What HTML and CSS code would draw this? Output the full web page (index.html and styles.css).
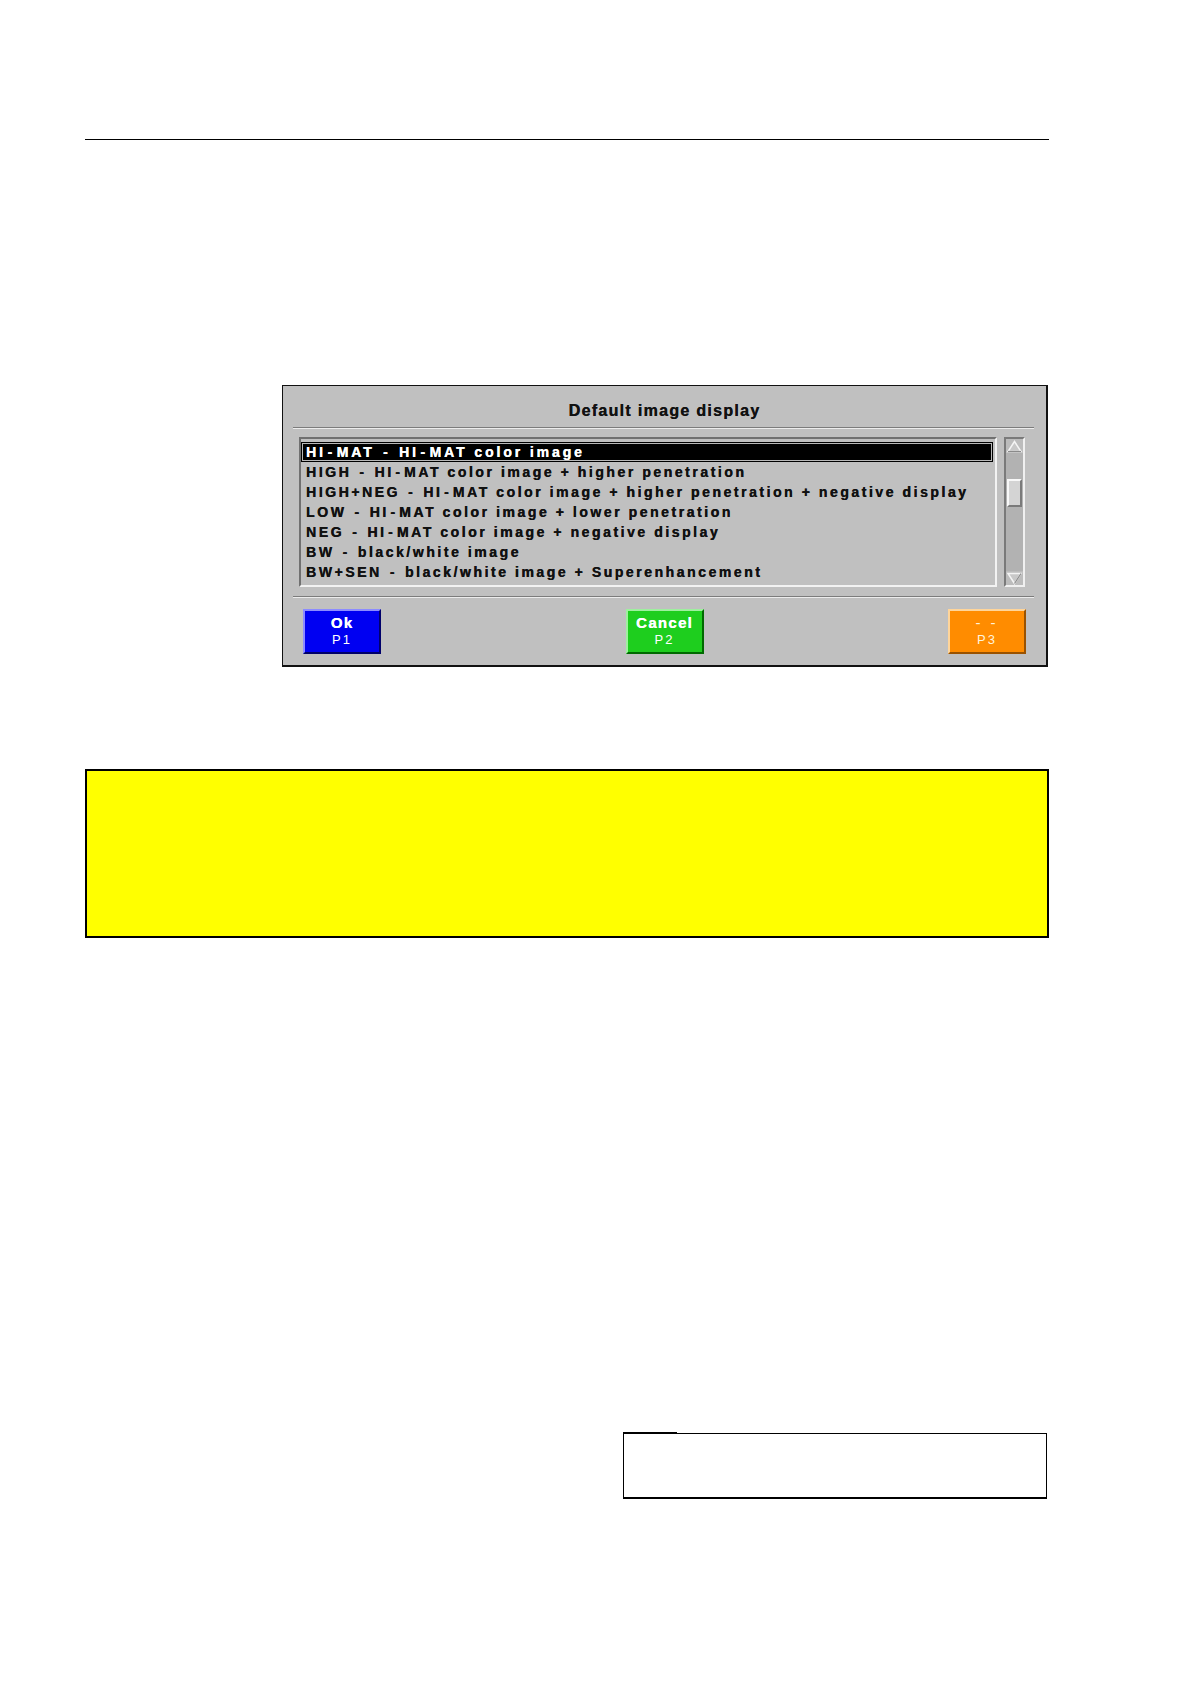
FILE: index.html
```html
<!DOCTYPE html>
<html>
<head>
<meta charset="utf-8">
<link rel="stylesheet" href="styles.css">
</head>
<body>
<div class="page">
  <div class="rule"></div>

  <div class="dialog">
    <div class="dialog-title">Default image display</div>
    <div class="groove"></div>
    <div class="list-row">
      <div class="listbox">
        <div class="item selected">HI<span class="h">-</span>MAT <span class="h">-</span> HI<span class="h">-</span>MAT color image</div>
        <div class="item">HIGH <span class="h">-</span> HI<span class="h">-</span>MAT color image + higher penetration</div>
        <div class="item">HIGH+NEG <span class="h">-</span> HI<span class="h">-</span>MAT color image + higher penetration + negative display</div>
        <div class="item">LOW <span class="h">-</span> HI<span class="h">-</span>MAT color image + lower penetration</div>
        <div class="item">NEG <span class="h">-</span> HI<span class="h">-</span>MAT color image + negative display</div>
        <div class="item">BW <span class="h">-</span> black/white image</div>
        <div class="item">BW+SEN <span class="h">-</span> black/white image + Superenhancement</div>
      </div>
      <div class="scrollbar">
        <div class="arrow">
          <svg width="17" height="13" viewBox="0 0 17 13"><path d="M8.5 1.5 L15 11.5 L2 11.5 Z" fill="#c8c8c8" stroke="#f4f4f4" stroke-width="1.5"/><path d="M15 11.5 L2 11.5" stroke="#8a8a8a" stroke-width="1.2"/></svg>
        </div>
        <div class="track">
          <div class="thumb"></div>
        </div>
        <div class="arrow">
          <svg width="17" height="13" viewBox="0 0 17 13"><path d="M2 1.5 L15 1.5 L8.5 11.5 Z" fill="#c8c8c8" stroke="#f4f4f4" stroke-width="1.5"/><path d="M15 1.5 L8.5 11.5" stroke="#8a8a8a" stroke-width="1.2"/></svg>
        </div>
      </div>
    </div>
    <div class="groove groove-low"></div>
    <div class="buttons">
      <div class="btn btn-blue"><span class="btn-main">Ok</span><span class="btn-key">P1</span></div>
      <div class="btn btn-green"><span class="btn-main">Cancel</span><span class="btn-key">P2</span></div>
      <div class="btn btn-orange"><span class="btn-main btn-dash">- -</span><span class="btn-key">P3</span></div>
    </div>
  </div>

  <div class="note"></div>

  <div class="box"></div>
</div>
</body>
</html>
```

FILE: styles.css
```css
html, body {
  margin: 0;
  padding: 0;
  background: #ffffff;
}

body {
  width: 1190px;
  min-height: 1684px;
  font-family: "Liberation Sans", Arial, sans-serif;
  color: #111;
}

.page {
  padding-left: 85px;
  width: 964px;
  padding-top: 139px;
}

.rule {
  height: 0;
  border-top: 1.5px solid #000;
}

.dialog {
  margin-top: 245px;
  margin-left: 197px;
  width: 763px;
  background: #c0c0c0;
  border: 1px solid #111;
  border-right-width: 2px;
  border-bottom-width: 2px;
  padding-bottom: 11px;
}

.dialog-title {
  text-align: center;
  font-weight: bold;
  font-size: 16px;
  letter-spacing: 1.3px;
  line-height: 20px;
  padding: 15px 0 6px;
  color: #111;
  text-shadow: 0.3px 0 0 currentColor;
}

.groove {
  margin: 0 12px 0 10px;
  border-top: 1px solid #7c7c7c;
  border-bottom: 1px solid #ececec;
}

.groove-low {
  margin-top: 9px;
}

.list-row {
  display: flex;
  margin-top: 8px;
  padding-left: 16px;
  gap: 7px;
}

.listbox {
  border: 2px solid;
  border-color: #707070 #f2f2f2 #f2f2f2 #707070;
  padding: 3px 2px 0 0;
  box-sizing: border-box;
  height: 150px;
  width: 698px;
}

.item {
  height: 20px;
  line-height: 20px;
  padding-left: 5px;
  font-weight: bold;
  font-size: 14px;
  letter-spacing: 2.55px;
  color: #111;
  white-space: nowrap;
  text-shadow: 0.35px 0 0 currentColor;
}

.item .h {
  padding: 0 1.6px;
}

.item.selected {
  background: #000;
  color: #fff;
  letter-spacing: 2.9px;
  box-shadow: inset 0 0 0 1px #000, inset 0 0 0 2px #b8b8b8;
}

.scrollbar {
  width: 21px;
  height: 150px;
  box-sizing: border-box;
  border: 2px solid;
  border-color: #7a7a7a #f0f0f0 #f0f0f0 #7a7a7a;
  background: #b2b2b2;
  display: flex;
  flex-direction: column;
}

.arrow {
  height: 14px;
  background: #bcbcbc;
  display: flex;
  align-items: center;
  justify-content: center;
}

.arrow svg {
  display: block;
}

.track {
  flex: 1;
  padding-top: 26px;
  display: flex;
  justify-content: center;
}

.thumb {
  width: 11px;
  height: 24px;
  background: #d4d4d4;
  border: 2px solid;
  border-color: #f8f8f8 #7a7a7a #7a7a7a #f8f8f8;
}

.buttons {
  display: flex;
  justify-content: space-between;
  padding: 0 20px;
  margin-top: 11px;
}

.btn {
  width: 74px;
  height: 38px;
  border: 2px solid;
  display: flex;
  flex-direction: column;
  align-items: center;
  padding-top: 3px;
  color: #fff;
}

.btn-main {
  font-weight: bold;
  font-size: 15px;
  letter-spacing: 1.3px;
  line-height: 17px;
  text-shadow: 0.3px 0 0 currentColor;
}

.btn-key {
  font-size: 13px;
  letter-spacing: 2px;
  line-height: 18px;
}

.btn-blue {
  background: #0000f2;
  border-color: #8c8cff #00006a #00006a #8c8cff;
}

.btn-green {
  background: #1ece1e;
  border-color: #9ef09e #006a00 #006a00 #9ef09e;
}

.btn-orange {
  background: #ff8c00;
  border-color: #ffd59a #9a5200 #9a5200 #ffd59a;
  color: #fff3dc;
}

.btn-dash {
  font-weight: normal;
  letter-spacing: 3px;
  text-shadow: none;
}

.note {
  margin-top: 102px;
  height: 165px;
  background: #ffff00;
  border: 2px solid #000;
}

.box {
  position: relative;
  margin-top: 495px;
  margin-left: 538px;
  width: 422px;
  height: 63px;
  border: 1px solid #000;
  border-bottom-width: 2px;
  border-right-width: 1.5px;
}

.box::before {
  content: "";
  position: absolute;
  left: -1px;
  top: -2px;
  width: 54px;
  height: 2px;
  background: #000;
}
```
